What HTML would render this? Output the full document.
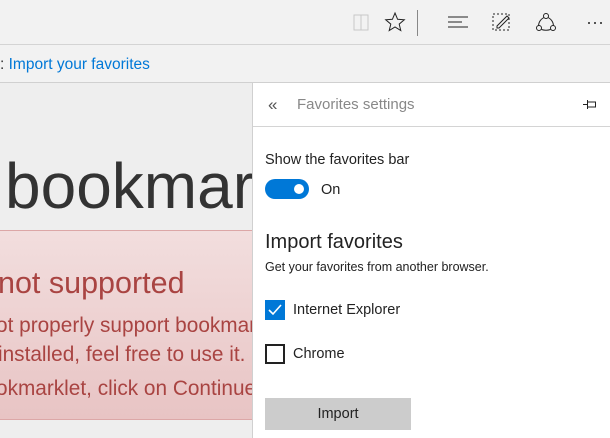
<!DOCTYPE html>
<html><head><style>
body{margin:0;width:610px;height:438px;overflow:hidden;background:#eeeeee;font-family:"Liberation Sans",sans-serif;position:relative}
.a{position:absolute}
</style></head><body>
<div class="a" style="left:0;top:0;width:610px;height:44px;background:#f2f2f2;border-bottom:1px solid #d4d4d4"></div>
<svg class="a" style="left:340px;top:0" width="270" height="44" viewBox="0 0 270 44" fill="none" stroke-width="1">
<path d="M14 15h7v15h-7zM21 15h7v15h-7z" stroke="#c8c8c8"/>
<path d="M55 13l2.6 6.3 6.7.5-5.1 4.3 1.6 6.5-5.8-3.6-5.8 3.6 1.6-6.5-5.1-4.3 6.7-.5z" stroke="#222"/>
<path d="M77.5 10v26" stroke="#888"/>
<path d="M108 17h20M108 22h14M108 27h20" stroke="#222"/>
<path d="M153 14h16v16h-16z" stroke="#222" stroke-dasharray="2 2"/>
<path d="M157 26l10-10 2 2-10 10h-2z" stroke="#222"/>
<circle cx="206" cy="16" r="2.5" stroke="#222"/><circle cx="199" cy="28" r="2.5" stroke="#222"/><circle cx="213" cy="28" r="2.5" stroke="#222"/>
<path d="M203.8 17.5q-5 3 -5.3 8M208.2 17.5q5 3 5.3 8M201.5 29.5q4.5 1.5 9 0" stroke="#222"/>
<circle cx="249" cy="23" r="1" fill="#222"/><circle cx="255" cy="23" r="1" fill="#222"/><circle cx="261" cy="23" r="1" fill="#222"/>
</svg>
<div class="a" style="left:0;top:45px;width:610px;height:37px;background:#f2f2f2;border-bottom:1px solid #d0d0d0"></div>
<div class="a" style="left:0px;top:56px;font-size:15.5px;color:#0078d7;white-space:nowrap"><span style="color:#333">:</span> Import your favorites</div>
<div class="a" style="left:5px;top:149px;font-size:64px;color:#333;white-space:nowrap">bookmar</div>
<div class="a" style="left:-10px;top:230px;width:262px;height:188px;background:linear-gradient(#f2dede,#e8c4c4);border-top:1px solid #dca7a7;border-bottom:1px solid #dca7a7"></div>
<div class="a" style="left:-2px;top:266px;font-size:30.5px;color:#a94442;white-space:nowrap">not supported</div>
<div class="a" style="left:-4px;top:314px;font-size:20.8px;color:#a94442;white-space:nowrap;width:256px;overflow:hidden">ot properly support bookmarklets</div>
<div class="a" style="left:-2px;top:343px;font-size:20.8px;color:#a94442;white-space:nowrap">installed, feel free to use it.</div>
<div class="a" style="left:-4px;top:377px;font-size:20.8px;color:#a94442;white-space:nowrap">okmarklet, click on Continue</div>
<div class="a" style="left:252px;top:83px;width:358px;height:355px;background:#fff;border-left:1px solid #d0d0d0"></div>
<div class="a" style="left:253px;top:126px;width:357px;height:1px;background:#d4d4d4"></div>
<div class="a" style="left:268px;top:95px;font-size:17px;color:#555">«</div>
<div class="a" style="left:297px;top:96px;font-size:15px;color:#888">Favorites settings</div>
<svg class="a" style="left:582px;top:98px" width="16" height="12"><path d="M1 6.5h4M5.5 2v9M5.5 4h8v5h-8" stroke="#222" fill="none"/></svg>
<div class="a" style="left:265px;top:152px;font-size:14.5px;color:#222">Show the favorites bar</div>
<div class="a" style="left:265px;top:179px;width:44px;height:20px;border-radius:10px;background:#0078d7"></div>
<div class="a" style="left:294px;top:184px;width:10px;height:10px;border-radius:5px;background:#fff"></div>
<div class="a" style="left:321px;top:182px;font-size:14.5px;color:#222">On</div>
<div class="a" style="left:265px;top:231px;font-size:20px;color:#222">Import favorites</div>
<div class="a" style="left:265px;top:260px;font-size:12.5px;color:#222">Get your favorites from another browser.</div>
<div class="a" style="left:265px;top:300px;width:20px;height:20px;background:#0078d7"></div>
<svg class="a" style="left:265px;top:300px" width="20" height="20"><path d="M4 10l4 4 8-9" stroke="#fff" stroke-width="1.6" fill="none"/></svg>
<div class="a" style="left:293px;top:302px;font-size:14.5px;color:#222">Internet Explorer</div>
<div class="a" style="left:265px;top:344px;width:16px;height:16px;border:2px solid #222"></div>
<div class="a" style="left:293px;top:346px;font-size:14.5px;color:#222">Chrome</div>
<div class="a" style="left:265px;top:398px;width:146px;height:32px;background:#cccccc"></div>
<div class="a" style="left:265px;top:406px;width:146px;text-align:center;font-size:14.5px;color:#222">Import</div>
</body></html>
